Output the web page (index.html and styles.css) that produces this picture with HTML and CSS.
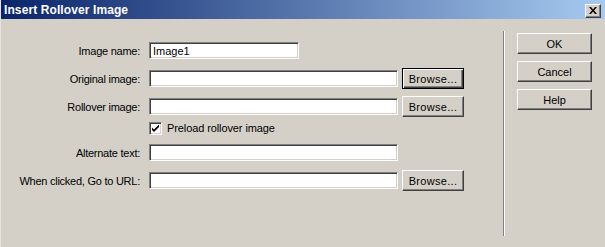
FILE: index.html
```html
<!DOCTYPE html>
<html lang="en">

<head>
    <meta charset="UTF-8">
    <meta name="viewport" content="width=device-width, initial-scale=1.0">
    <title>Insert Rollover Image</title>
    <!-- Stylesheet -->
    <link rel="stylesheet" href="styles.css">
</head>

<body>
    <div class="dialog">
        <div class="titlebar">
            <span class="title">Insert Rollover Image</span>
            <button class="close" type="button" aria-label="Close">
                <svg width="8" height="7" viewBox="0 0 8 7">
                    <path d="M0 0h2l2 2.5 2-2.5h2l-3 3.5 3 3.5h-2l-2-2.5-2 2.5h-2l3-3.5z" fill="#000" />
                </svg>
            </button>
        </div>

        <div class="content">
            <div class="form">
                <div class="row">
                    <label class="label">Image name:</label>
                    <input class="field field-short" type="text" value="Image1">
                </div>
                <div class="row">
                    <label class="label">Original image:</label>
                    <input class="field" type="text">
                    <button class="btn btn-browse btn-default" type="button">Browse...</button>
                </div>
                <div class="row">
                    <label class="label">Rollover image:</label>
                    <input class="field" type="text">
                    <button class="btn btn-browse" type="button">Browse...</button>
                </div>
                <div class="row row-check">
                    <span class="label"></span>
                    <label class="check">
                        <span class="box">
                            <svg width="9" height="9" viewBox="0 0 9 9">
                                <path d="M1 3.5l2 2 5-5v2.5l-5 5-2-2z" fill="#000" />
                            </svg>
                        </span>
                        Preload rollover image
                    </label>
                </div>
                <div class="row">
                    <label class="label">Alternate text:</label>
                    <input class="field" type="text">
                </div>
                <div class="row">
                    <label class="label">When clicked, Go to URL:</label>
                    <input class="field" type="text">
                    <button class="btn btn-browse" type="button">Browse...</button>
                </div>
            </div>

            <div class="separator"></div>

            <div class="actions">
                <button class="btn btn-action" type="button">OK</button>
                <button class="btn btn-action" type="button">Cancel</button>
                <button class="btn btn-action" type="button">Help</button>
            </div>
        </div>
    </div>
</body>

</html>
```

FILE: styles.css
```css
* {
    padding: 0;
    margin: 0;
    box-sizing: border-box;
    font-family: "Liberation Sans", Arial, sans-serif;
}

body {
    background-color: #d4d0c8;
    width: 605px;
    height: 247px;
    overflow: hidden;
}

.dialog {
    height: 100%;
    border-left: 1px solid #e6e4df;
}

.titlebar {
    height: 19px;
    display: flex;
    align-items: center;
    justify-content: space-between;
    padding: 0 4px 0 3px;
    background: linear-gradient(to right, #0a246a, #a6caf0);
}

.title {
    color: #ffffff;
    font-weight: bold;
    font-size: 12px;
    letter-spacing: 0.1px;
}

.close {
    width: 16px;
    height: 14px;
    margin-top: 2px;
    display: flex;
    align-items: center;
    justify-content: center;
    background-color: #d4d0c8;
    border: 1px solid;
    border-color: #ffffff #404040 #404040 #ffffff;
    box-shadow: inset -1px -1px #808080;
}

.content {
    display: flex;
}

.form {
    width: 502px;
    padding-top: 21px;
    display: flex;
    flex-direction: column;
    gap: 7px;
}

.row {
    height: 21px;
    display: flex;
    align-items: center;
}

.row-check {
    height: 14px;
    margin-top: -3px;
}

.label {
    width: 139px;
    margin-right: 9px;
    text-align: right;
    font-size: 11px;
    letter-spacing: -0.25px;
    color: #000;
    white-space: nowrap;
}

.field {
    width: 249px;
    height: 17px;
    padding: 0 3px;
    font-size: 11px;
    color: #000;
    background-color: #ffffff;
    border: 1px solid;
    border-color: #808080 #ffffff #ffffff #808080;
    box-shadow: inset 1px 1px #404040, inset -1px -1px #d4d0c8;
    outline: none;
}

.field-short {
    width: 150px;
}

.btn {
    height: 21px;
    font-size: 11px;
    color: #000;
    background-color: #d4d0c8;
    border: 1px solid;
    border-color: #ffffff #404040 #404040 #ffffff;
    box-shadow: inset -1px -1px #808080;
}

.btn-browse {
    width: 62px;
    margin-left: 4px;
    letter-spacing: 0.3px;
}

.btn-default {
    border-color: #000000;
    box-shadow: inset 1px 1px #ffffff, inset -1px -1px #404040, inset -2px -2px #808080;
}

.check {
    display: flex;
    align-items: center;
    gap: 5px;
    font-size: 11px;
    letter-spacing: -0.1px;
    color: #000;
}

.box {
    width: 13px;
    height: 13px;
    display: flex;
    align-items: center;
    justify-content: center;
    background-color: #ffffff;
    border: 1px solid;
    border-color: #808080 #ffffff #ffffff #808080;
    box-shadow: inset 1px 1px #404040, inset -1px -1px #d4d0c8;
}

.separator {
    width: 2px;
    height: 205px;
    margin-top: 12px;
    border-left: 1px solid #808080;
    border-right: 1px solid #ffffff;
}

.actions {
    padding: 14px 0 0 12px;
    display: flex;
    flex-direction: column;
    gap: 7px;
}

.btn-action {
    width: 75px;
}
```
